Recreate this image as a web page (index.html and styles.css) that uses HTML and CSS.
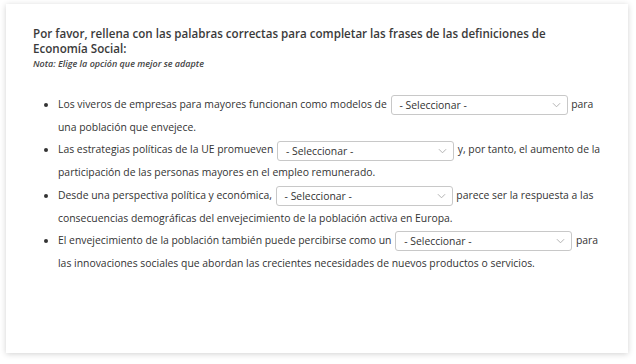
FILE: index.html
```html
<!DOCTYPE html>
<html lang="es">

<head>
  <meta charset="UTF-8">
  <title>Economía Social</title>
  <link rel="stylesheet" href="styles.css">
</head>

<body>

  <div class="card">
    <h2>Por favor, rellena con las palabras correctas para completar las frases de las definiciones de Economía Social:</h2>
    <p class="note">Nota: Elige la opción que mejor se adapte</p>

    <ul class="questions">
      <li>Los viveros de empresas para mayores funcionan como modelos de
        <span class="select"><span>- Seleccionar -</span><svg viewBox="0 0 10 6"><path d="M1 1l4 4 4-4" /></svg></span>
        para una población que envejece.</li>
      <li>Las estrategias políticas de la UE promueven
        <span class="select"><span>- Seleccionar -</span><svg viewBox="0 0 10 6"><path d="M1 1l4 4 4-4" /></svg></span>
        y, por tanto, el aumento de la participación de las personas mayores en el empleo remunerado.</li>
      <li>Desde una perspectiva política y económica,
        <span class="select"><span>- Seleccionar -</span><svg viewBox="0 0 10 6"><path d="M1 1l4 4 4-4" /></svg></span>
        parece ser la respuesta a las consecuencias demográficas del envejecimiento de la población activa en Europa.</li>
      <li>El envejecimiento de la población también puede percibirse como un
        <span class="select"><span>- Seleccionar -</span><svg viewBox="0 0 10 6"><path d="M1 1l4 4 4-4" /></svg></span>
        para las innovaciones sociales que abordan las crecientes necesidades de nuevos productos o servicios.</li>
    </ul>
  </div>

</body>

</html>
```

FILE: styles.css
```css
body {
  font-family: "Open Sans", sans-serif;
  background: #fff;
  margin: 0;
  padding: 4px 8px 11px 6px;
  color: #333;
}

.card {
  background: #fff;
  height: 349px;
  box-sizing: border-box;
  padding: 22px 27px;
  box-shadow: 0 1px 6px rgba(0, 0, 0, 0.18);
}

.card h2 {
  font-size: 11.6px;
  font-weight: 600;
  line-height: 15px;
  margin: 0;
  color: #3a3a3a;
}

.note {
  font-size: 9px;
  font-style: italic;
  font-weight: 600;
  margin: 1px 0 0;
  color: #444;
}

.questions {
  margin: 23px 0 0;
  padding: 0 0 0 25px;
  font-size: 10.4px;
  line-height: 22.7px;
}

.select {
  display: inline-flex;
  align-items: center;
  justify-content: space-between;
  width: 177px;
  height: 20px;
  box-sizing: border-box;
  padding: 0 6px 0 8px;
  margin: 0 1px;
  border: 1px solid #c8c8c8;
  border-radius: 3px;
  vertical-align: middle;
  line-height: 18px;
}

.select svg {
  width: 9px;
  height: 6px;
  fill: none;
  stroke: #aaa;
  stroke-width: 1;
}
```
